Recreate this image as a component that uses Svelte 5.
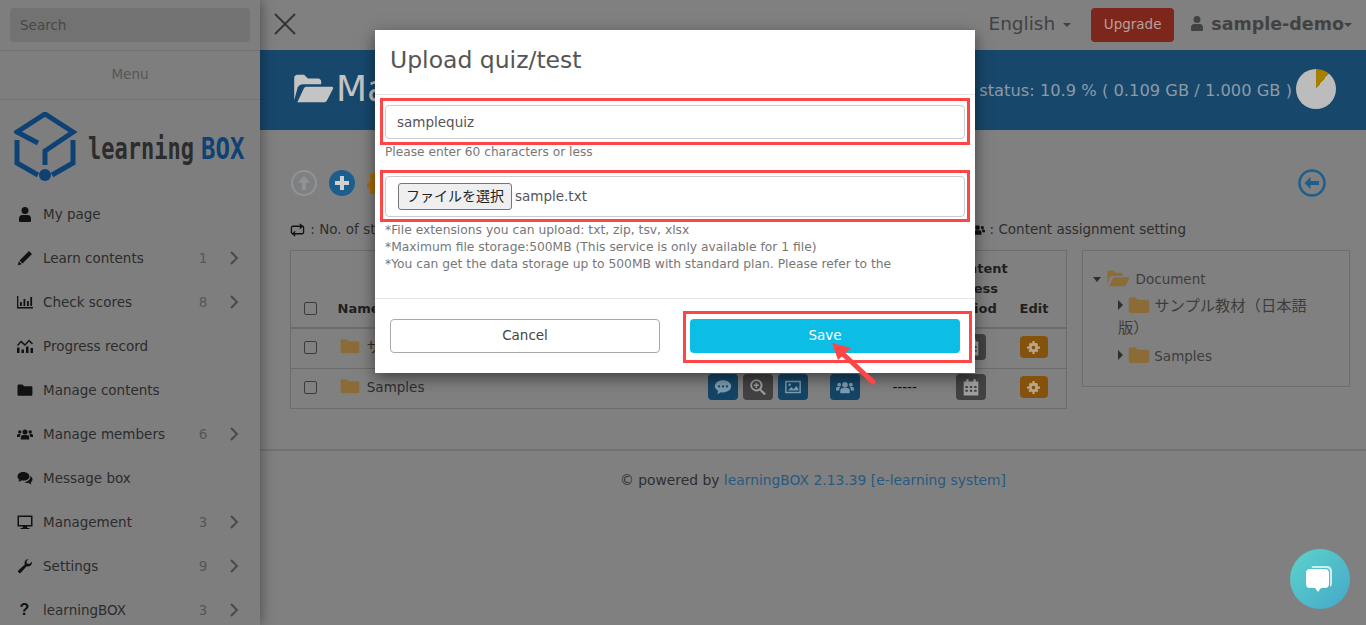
<script lang="ts">
  const icons: Record<string, string> = {
    user: 'M8 1a3.5 3.5 0 1 1 0 7a3.5 3.5 0 1 1 0-7z M2 15v-2.5C2 10.3 3.5 9 5 9h6c1.500 0 3 1.300 3 3.500V15c0 .5-.5 1-1 1H3c-.5 0-1-.5-1-1z',
    pencil: 'M12 1l3 3-9.500 9.500-3-3zM1.800 11.200l3 3L.8 15.200z',
    chart: 'M0 2h1.300v11H16v1.500H0zM3 8h1.800v4H3zM6.500 5h1.800v7H6.500zM10 7h1.800v5H10zM13.300 3h1.800v9h-1.800z',
    progress: 'M0 9.500h2.500V15H0zM4.500 11.500H7V15H4.500zM9 8.500h2.500V15H9zM13.500 10H16v5h-2.500zM0 7l4-4.500 4 3.500 4-4.500 4 4-1 1-3-3-4 4.500-4-3.500-3 3.500z',
    folder: 'M.5 4c0-.8.6-1.400 1.400-1.400h3.600l1.600 1.600h6.900c.8 0 1.400.6 1.400 1.400v6.800c0 .8-.6 1.400-1.400 1.400H1.900c-.8 0-1.400-.6-1.400-1.400z',
    users: 'M8 3.500a2.500 2.500 0 1 1 0 5a2.500 2.500 0 1 1 0-5zM3.800 13.500v-2.300c0-1.400 1-2.300 2.200-2.300h4c1.200 0 2.200.9 2.200 2.300v2.300zM2.800 4.200a1.700 1.700 0 1 1 0 3.400a1.700 1.700 0 1 1 0-3.400zM13.200 4.200a1.700 1.700 0 1 1 0 3.400a1.700 1.700 0 1 1 0-3.400zM0 11V9.600C0 8.600.7 8 1.600 8h2.200c-.6.7-1 1.500-1 3zM16 11V9.600c0-1-.7-1.600-1.600-1.600h-2.200c.6.700 1 1.500 1 3z',
    comments: 'M6.500 2C3 2 .5 4 .5 6.500c0 1.300.7 2.400 1.800 3.200L1.500 12l3-1.600c.6.1 1.300.2 2 .2 3.500 0 6-1.900 6-4.100S10 2 6.500 2zM13.500 6c1.200.8 2 1.900 2 3.200 0 1.200-.7 2.300-1.800 3l.8 2.300-3-1.600c-1.500.2-3-.1-4.200-.9 3.500 0 6.200-2.600 6.200-6z',
    desktop: 'M.5 1.500h15v11h-5.500l.5 1.500h2v1H3.500v-1h2l.5-1.500H.5zM2 3v8h12V3z',
    wrench: 'M15 4.500a4 4 0 0 1-5.300 3.800L4 14.500a1.600 1.600 0 0 1-2.500-2.300l6.300-5.700A4 4 0 0 1 11.500 1l-2 2.200.4 2.400 2.400.5 2.200-2.100z',
    gear: 'M8 3a5 5 0 1 1 0 10a5 5 0 1 1 0-10zM8 6a2 2 0 1 0 0 4a2 2 0 1 0 0-4zM6.800 1h2.400v3H6.800zM6.800 12h2.400v3H6.800zM1 6.800h3v2.400H1zM12 6.800h3v2.400h-3zM2.800 4.500l1.700-1.700 2 2-1.700 1.700zM9.500 11.200l1.700-1.700 2 2-1.700 1.700zM11.200 2.800l1.700 1.700-2 2-1.700-1.700zM4.500 9.500l1.700 1.700-2 2-1.700-1.700z',
    calendar: 'M1.500 3h2.300V1.200h2V3h4.400V1.200h2V3h2.300v12.500h-13zM3 7v1.800h2.200V7zM6.900 7v1.800h2.200V7zM10.800 7v1.800H13V7zM3 10.500v1.800h2.200v-1.800zM6.900 10.500v1.800h2.200v-1.800zM10.800 10.500v1.800H13v-1.800z',
    zoom: 'M6.500 1a5.500 5.500 0 0 1 4.300 8.900l4.200 4.200-1.300 1.300-4.200-4.200A5.500 5.500 0 1 1 6.500 1zM6.500 2.700a3.800 3.800 0 1 0 0 7.600a3.800 3.800 0 1 0 0-7.600zM5.800 4.200h1.400v1.600h1.600v1.400H7.200v1.600H5.800V7.200H4.200V5.800h1.600z',
    image: 'M1 2.500h14v11H1zM2.300 3.800v8.400h11.400V3.800zM3.500 11l3-3 2 2 2.500-3 1.800 2.500V11zM5 4.800a1.200 1.200 0 1 1 0 2.400a1.200 1.200 0 1 1 0-2.400z',
    comment: 'M8 2c4 0 7.300 2.400 7.300 5.400S12 12.800 8 12.800c-.7 0-1.300-.1-1.900-.2L3 14.500l.7-3.100C1.900 10.400.7 9 .7 7.400.7 4.400 4 2 8 2zM4.500 6.500a1 1 0 1 0 0 2a1 1 0 1 0 0-2zM8 6.500a1 1 0 1 0 0 2a1 1 0 1 0 0-2zM11.500 6.500a1 1 0 1 0 0 2a1 1 0 1 0 0-2z',
    openFolder: 'M1 13.500V3.400C1 2.600 1.600 2 2.400 2h3.100l1.700 1.700h4.600c.8 0 1.400.6 1.400 1.400v1.200H5c-1 0-1.900.5-2.400 1.400zM2.400 14.500l2.900-6.200c.3-.6.8-.9 1.400-.9H18c.6 0 .8.5.5 1l-2.700 5.200c-.3.6-.9.900-1.500.900z',
  };

  const navItems = [
    { icon: 'user', label: 'My page' },
    { icon: 'pencil', label: 'Learn contents', count: 1 },
    { icon: 'chart', label: 'Check scores', count: 8 },
    { icon: 'progress', label: 'Progress record' },
    { icon: 'folder', label: 'Manage contents' },
    { icon: 'users', label: 'Manage members', count: 6 },
    { icon: 'comments', label: 'Message box' },
    { icon: 'desktop', label: 'Management', count: 3 },
    { icon: 'wrench', label: 'Settings', count: 9 },
    { icon: '?', label: 'learningBOX', count: 3 },
  ];

  const rows = [
    { name: 'サンプル教材（日本語版）' },
    { name: 'Samples' },
  ];
</script>

{#snippet icon(name: string, cls = '')}
  <svg class="ic {cls}" viewBox="0 0 16 16" aria-hidden="true"><path d={icons[name]} /></svg>
{/snippet}

<div class="page">
  <aside class="side">
    <div class="side-search"><div class="search-box">Search</div></div>
    <div class="side-menu">Menu</div>
    <div class="logo">
      <svg width="232" height="72" viewBox="0 0 232 72" role="img" aria-label="learningBOX">
        <g fill="none" stroke="#0e4274" stroke-width="5">
          <path d="M24 31L3 20 31 2l28 18-28 19v14" />
          <path d="M3 28v23l21 12" />
          <path d="M59 28v23L38 63" />
        </g>
        <circle cx="31" cy="63" r="6" fill="#0e4274" />
        <text class="logo-a" transform="translate(74 47) scale(1 1.400)">learning</text>
        <text class="logo-b" transform="translate(187 47) scale(1 1.280)">BOX</text>
      </svg>
    </div>
    <nav class="nav">
      {#each navItems as item (item.label)}
        <div class="nav-item">
          <span class="nav-icon">
            {#if item.icon === '?'}
              <span class="q">?</span>
            {:else}
              {@render icon(item.icon)}
            {/if}
          </span>
          <span class="nav-label">{item.label}</span>
          {#if item.count}
            <span class="nav-count">{item.count}</span>
            <svg class="chev" viewBox="0 0 10 16" aria-hidden="true"><path d="M2 2l6 6-6 6" /></svg>
          {/if}
        </div>
      {/each}
    </nav>
  </aside>

  <main class="main">
    <header class="top">
      <svg class="close" viewBox="0 0 24 24" aria-hidden="true"><path d="M2 2l20 20M22 2L2 22" /></svg>
      <div class="top-right">
        <span class="lang">English <i class="caret"></i></span>
        <span class="upgrade">Upgrade</span>
        <span class="account">
          <svg class="ic acct-ic" viewBox="0 0 16 16" aria-hidden="true"><path d={icons.user} /></svg>
          sample-demo<i class="caret small"></i>
        </span>
      </div>
    </header>

    <section class="band">
      <svg class="band-ic" viewBox="0 0 19 16" aria-hidden="true"><path d={icons.openFolder} /></svg>
      <h1>Manage contents</h1>
      <div class="status">status: 10.9 % ( 0.109 GB / 1.000 GB )</div>
      <div class="pie"></div>
    </section>

    <section class="content">
      <div class="toolbar">
        <svg class="round up" viewBox="0 0 26 26" aria-hidden="true">
          <circle cx="13" cy="13" r="12" />
          <path d="M13 6l6 6.500h-4V20h-4v-7.500H7z" />
        </svg>
        <svg class="round plus" viewBox="0 0 26 26" aria-hidden="true">
          <circle cx="13" cy="13" r="13" />
          <path d="M11 6h4v5h5v4h-5v5h-4v-5H6v-4h5z" />
        </svg>
        <svg class="puzzle" viewBox="0 0 20 22" aria-hidden="true">
          <path d="M3 2h4c-1-2 0-2 1.500-2S11 0 10 2h7v20H3v-6c-2 1-3 0-3-2.500S1 10 3 11z" />
        </svg>
        <svg class="round back" viewBox="0 0 28 28" aria-hidden="true">
          <circle cx="14" cy="14" r="12.500" />
          <path d="M12.500 8l-6 6 6 6v-4H21v-4h-8.500z" />
        </svg>
      </div>

      <div class="legend">
        <span class="lg">
          <svg class="retweet" viewBox="0 0 16 16" aria-hidden="true">
            <path d="M4 12.500H3a1.500 1.500 0 0 1-1.500-1.500V6A1.500 1.500 0 0 1 3 4.500h9.500M10.500 2l2.500 2.500L10.500 7" />
            <path d="M12 4.500h1A1.500 1.500 0 0 1 14.500 6v5a1.500 1.500 0 0 1-1.500 1.500H3.500M5.500 10L3 12.500 5.500 15" />
          </svg>
          : No. of study
        </span>
        <span class="lg">{@render icon('users')} : Content assignment setting</span>
      </div>

      <div class="columns">
        <table class="tbl">
          <colgroup>
            <col style="width:47px" /><col /><col style="width:122px" /><col style="width:55px" />
            <col style="width:65px" /><col style="width:70px" /><col style="width:47px" />
          </colgroup>
          <thead>
            <tr>
              <th class="cb"><span class="check"></span></th>
              <th>Name</th>
              <th></th>
              <th></th>
              <th></th>
              <th>Content access period</th>
              <th>Edit</th>
            </tr>
          </thead>
          <tbody>
            {#each rows as r (r.name)}
              <tr>
                <td class="cb"><span class="check"></span></td>
                <td><span class="row-name">{@render icon('folder', 'folder-ic')} {r.name}</span></td>
                <td>
                  <span class="acts">
                    <span class="btn blue">{@render icon('comment')}</span>
                    <span class="btn dark">{@render icon('zoom')}</span>
                    <span class="btn blue">{@render icon('image')}</span>
                  </span>
                </td>
                <td><span class="btn blue">{@render icon('users')}</span></td>
                <td class="dash">-----</td>
                <td><span class="btn dark cal">{@render icon('calendar')}</span></td>
                <td><span class="btn orange">{@render icon('gear')}</span></td>
              </tr>
            {/each}
          </tbody>
        </table>

        <div class="tree">
          <div class="tree-root">
            <i class="tri down"></i>
            <svg class="tree-open" viewBox="0 0 19 16" aria-hidden="true"><path d={icons.openFolder} /></svg>
            Document
          </div>
          <div class="tree-node">
            <i class="tri"></i>{@render icon('folder', 'tree-folder')} <span class="ja">サンプル教材（日本語版）</span>
          </div>
          <div class="tree-node">
            <i class="tri"></i>{@render icon('folder', 'tree-folder')} Samples
          </div>
        </div>
      </div>
    </section>

    <footer class="foot">© powered by <span class="foot-link">learningBOX 2.13.39 [e-learning system]</span></footer>
  </main>

  <div class="chat">
    <svg viewBox="0 0 32 32" width="32" height="32" aria-hidden="true">
      <path class="chat-back" d="M9 3h14c3 0 5 2 5 5v12c0 2-.6 3.200-2 4V9c0-2.500-1.500-4-4-4H7.500C7.800 3.700 8.300 3 9 3z" />
      <path class="chat-front" d="M6 6h15c2.500 0 4 1.500 4 4v11c0 2.500-1.500 4-4 4h-4l-3 4-3-4H6c-2.500 0-4-1.500-4-4V10c0-2.500 1.500-4 4-4z" />
    </svg>
  </div>

  <div class="modal" role="dialog" aria-label="Upload quiz/test">
    <div class="modal-head"><h2>Upload quiz/test</h2></div>
    <div class="modal-body">
      <div class="marked first"><div class="field">samplequiz</div></div>
      <p class="hint">Please enter 60 characters or less</p>
      <div class="marked second">
        <div class="field file"><span class="file-btn">ファイルを選択</span><span>sample.txt</span></div>
      </div>
      <div class="notes">
        <p>*File extensions you can upload: txt, zip, tsv, xlsx</p>
        <p>*Maximum file storage:500MB (This service is only available for 1 file)</p>
        <p>*You can get the data storage up to 500MB with standard plan. Please refer to the</p>
      </div>
    </div>
    <div class="modal-foot">
      <button class="cancel" type="button">Cancel</button>
      <div class="marked third"><button class="save" type="button">Save</button></div>
    </div>
    <svg class="pointer" viewBox="0 0 50 50" aria-hidden="true">
      <path d="M45 43L15 15" class="pointer-line" />
      <path d="M4 4l19 5-13 12z" class="pointer-head" />
    </svg>
  </div>
</div>

<style>
  :global(body) {
    margin: 0;
    background: #808080;
    overflow: hidden;
  }

  .page {
    position: relative;
    display: flex;
    width: 1366px;
    height: 625px;
    overflow: hidden;
    font-family: 'DejaVu Sans', 'Noto Sans CJK JP', sans-serif;
    font-size: 13.500px;
    color: #333;
    background: #808080;
  }

  .ic {
    display: inline-block;
    width: 16px;
    height: 16px;
    fill: currentColor;
    vertical-align: -3px;
  }

  /* ── Sidebar ── */
  .side {
    position: relative;
    z-index: 1;
    flex: 0 0 260px;
    height: 625px;
    overflow: hidden;
    background: #7e7e7e;
    box-shadow: 2px 0 12px rgba(0, 0, 0, 0.35);
  }

  .side-search {
    height: 51px;
    padding: 8px 10px;
    box-sizing: border-box;
    border-bottom: 1px solid #727272;
  }

  .search-box {
    height: 34px;
    line-height: 34px;
    padding-left: 10px;
    border-radius: 4px;
    background: #727272;
    color: #474747;
  }

  .side-menu {
    height: 49px;
    line-height: 47px;
    box-sizing: border-box;
    text-align: center;
    color: #565656;
    border-bottom: 1px solid #727272;
  }

  .logo {
    height: 92px;
    padding: 12px 0 0 14px;
    box-sizing: border-box;
  }

  .logo-a {
    font-family: 'DejaVu Sans Mono', monospace;
    font-weight: 700;
    font-size: 22px;
    fill: #2c2c2c;
  }

  .logo-b {
    font-family: 'DejaVu Sans Mono', monospace;
    font-weight: 700;
    font-size: 24px;
    fill: #0e4274;
  }

  .nav {
    display: flex;
    flex-direction: column;
  }

  .nav-item {
    display: flex;
    align-items: center;
    height: 44px;
    padding-left: 16px;
    color: #2c2c2c;
  }

  .nav-icon {
    display: flex;
    justify-content: center;
    width: 17px;
    margin-right: 10px;
    color: #111;
  }

  .q {
    font-family: 'Liberation Sans', sans-serif;
    font-weight: 700;
    font-size: 16px;
    line-height: 16px;
  }

  .nav-label {
    flex: 1;
  }

  .nav-count {
    width: 10px;
    margin-right: 21px;
    text-align: center;
    color: #565656;
  }

  .chev {
    width: 10px;
    height: 16px;
    margin-right: 21px;
    fill: none;
    stroke: #4a4a4a;
    stroke-width: 2;
  }

  /* ── Main ── */
  .main {
    flex: 1;
    min-width: 0;
    display: flex;
    flex-direction: column;
  }

  .top {
    display: flex;
    align-items: center;
    justify-content: space-between;
    height: 50px;
    padding: 0 14px 0 13px;
    box-sizing: border-box;
  }

  .close {
    width: 24px;
    height: 24px;
    margin-top: -2px;
    fill: none;
    stroke: #333;
    stroke-width: 1.800;
  }

  .top-right {
    display: flex;
    align-items: center;
    gap: 15px;
  }

  .lang,
  .account {
    margin-top: -3px;
    font-size: 17.500px;
    font-weight: 700;
    color: #424242;
  }

  .lang {
    font-size: 18.500px;
    font-weight: 400;
    margin-right: 5px;
  }

  .caret {
    display: inline-block;
    vertical-align: 3px;
    margin-left: 2px;
    border-top: 4px solid #424242;
    border-left: 4px solid transparent;
    border-right: 4px solid transparent;
  }

  .caret.small {
    margin-left: 0;
  }

  .upgrade {
    width: 83px;
    height: 34px;
    line-height: 33px;
    text-align: center;
    border-radius: 4px;
    background: #7c261c;
    color: #b8a09c;
    font-size: 13.500px;
  }

  .acct-ic {
    width: 16px;
    height: 20px;
    vertical-align: -3px;
  }

  .band {
    display: flex;
    align-items: center;
    height: 80px;
    padding: 0 30px 0 32px;
    box-sizing: border-box;
    background: #17486c;
    color: #c4c4c4;
  }

  .band-ic {
    width: 42px;
    height: 36px;
    fill: #c4c4c4;
    margin-right: 2px;
    margin-top: -4px;
  }

  h1 {
    margin: -4px 0 0;
    font-size: 36px;
    font-weight: 400;
    white-space: nowrap;
  }

  .status {
    margin-left: auto;
    margin-right: 4px;
    font-size: 16.300px;
    white-space: nowrap;
    color: #8c9aa6;
  }

  .pie {
    flex: none;
    width: 40px;
    height: 40px;
    margin-top: -2px;
    border-radius: 50%;
    background: conic-gradient(#a47f00 0 10.9%, #bcbcbc 10.9% 100%);
  }

  /* ── Content ── */
  .content {
    padding: 40px 16px 0 30px;
  }

  .toolbar {
    display: flex;
    align-items: center;
    height: 26px;
    gap: 12px;
    padding-left: 1px;
  }

  .round {
    width: 26px;
    height: 26px;
  }

  .up circle {
    fill: none;
    stroke: #8b959c;
    stroke-width: 2;
  }

  .up path {
    fill: #8b959c;
  }

  .plus circle {
    fill: #1c5e8e;
  }

  .plus path {
    fill: #d0d0d0;
  }

  .puzzle {
    width: 20px;
    height: 22px;
    fill: #a86c0c;
  }

  .back {
    width: 28px;
    height: 28px;
    margin-left: auto;
    margin-right: 24px;
  }

  .back circle {
    fill: none;
    stroke: #1c5e8e;
    stroke-width: 2.500;
  }

  .back path {
    fill: #1c5e8e;
  }

  .legend {
    display: flex;
    justify-content: space-between;
    width: 896px;
    height: 20px;
    margin-top: 23px;
    line-height: 20px;
    color: #2e2e2e;
  }

  .lg .retweet {
    width: 15px;
    height: 15px;
    margin-right: 1px;
    vertical-align: -3px;
    fill: none;
    stroke: #111;
    stroke-width: 1.400;
  }

  .lg :global(.ic) {
    width: 15px;
    height: 15px;
    color: #111;
  }

  .columns {
    display: flex;
    align-items: flex-start;
    gap: 15px;
    margin-top: 11px;
  }

  .tbl {
    flex: none;
    width: 777px;
    table-layout: fixed;
    border-collapse: collapse;
    border: 1px solid #6c6c6c;
    color: #2e2e2e;
  }

  .tbl th {
    padding: 8px 0 8px;
    box-sizing: border-box;
    border-bottom: 2px solid #6c6c6c;
    vertical-align: bottom;
    text-align: left;
    font-weight: 700;
    font-size: 13px;
    line-height: 20px;
    color: #1f1f1f;
  }

  .tbl td {
    height: 40px;
    padding: 0 0 2px;
    box-sizing: border-box;
    border-bottom: 1px solid #6c6c6c;
  }

  .tbl .cb {
    padding-left: 13px;
  }

  .check {
    display: inline-block;
    width: 13px;
    height: 13px;
    vertical-align: -2px;
    border: 1px solid #3d3d3d;
    border-radius: 2px;
    box-sizing: border-box;
  }

  .row-name {
    position: relative;
    top: -1px;
    white-space: nowrap;
  }

  .row-name :global(.folder-ic) {
    width: 20px;
    height: 20px;
    margin: 0 3px 0 2px;
    vertical-align: -4px;
    color: #8c6c36;
  }

  .acts {
    display: flex;
    gap: 5px;
  }

  .btn {
    display: inline-flex;
    align-items: center;
    justify-content: center;
    width: 30px;
    height: 26px;
    border-radius: 4px;
    vertical-align: middle;
  }

  .btn :global(.ic) {
    width: 18px;
    height: 18px;
  }

  .blue {
    background: #154566;
    color: #7d9cb2;
  }

  .dark {
    background: #424242;
    color: #a0a0a0;
  }

  .orange {
    width: 28px;
    height: 22px;
    background: #84520a;
    color: #b8a58a;
  }

  .orange :global(.ic) {
    width: 15px;
    height: 15px;
  }

  .cal {
    margin-left: 6px;
  }

  .tbl .dash {
    padding-left: 8px;
    color: #111;
  }

  .tree {
    flex: none;
    box-sizing: border-box;
    width: 268px;
    height: 137px;
    padding: 17px 10px 0 10px;
    border: 1px solid #6c6c6c;
    color: #3d3d3d;
  }

  .tree-root {
    line-height: 20px;
  }

  .tree-open {
    width: 24px;
    height: 20px;
    margin: 0 1px;
    vertical-align: -4px;
    fill: #8c6c36;
  }

  .tree-node {
    margin-top: 5px;
    padding: 0 25px 0 25px;
    line-height: 22px;
  }

  .tree-node + .tree-node {
    margin-top: 5px;
  }

  .ja {
    font-size: 15.300px;
  }

  .tree-node :global(.tree-folder) {
    width: 22px;
    height: 22px;
    vertical-align: -5px;
    color: #8c6c36;
  }

  .tri {
    display: inline-block;
    margin-right: 5px;
    vertical-align: 1px;
    border-left: 5px solid #2e2e2e;
    border-top: 5px solid transparent;
    border-bottom: 5px solid transparent;
  }

  .tri.down {
    margin-right: 0;
    vertical-align: 2px;
    border-left: 4.500px solid transparent;
    border-right: 4.500px solid transparent;
    border-top: 5px solid #2e2e2e;
    border-bottom: 0;
  }

  .foot {
    margin-top: 40px;
    padding-top: 19px;
    border-top: 2px solid #727272;
    text-align: center;
    font-size: 13.850px;
    color: #2e2e2e;
    line-height: 20px;
  }

  .foot-link {
    color: #265a80;
  }

  .chat {
    position: absolute;
    left: 1290px;
    top: 549px;
    z-index: 1;
    display: flex;
    align-items: center;
    justify-content: center;
    width: 60px;
    height: 60px;
    border-radius: 50%;
    background: linear-gradient(135deg, #5cd3cb, #45a8c9);
  }

  .chat-back {
    fill: #cfeef0;
  }

  .chat-front {
    fill: #fff;
  }

  /* ── Modal ── */
  .modal {
    position: absolute;
    left: 375px;
    top: 30px;
    z-index: 2;
    width: 600px;
    height: 343px;
    background: #fff;
    box-shadow: 0 5px 15px rgba(0, 0, 0, 0.5);
    color: #555;
  }

  .modal-head {
    height: 65px;
    padding: 0 15px;
    box-sizing: border-box;
    border-bottom: 1px solid #e5e5e5;
  }

  h2 {
    margin: 0;
    font-size: 23.500px;
    font-weight: 400;
    line-height: 61px;
    color: #555;
  }

  .modal-body {
    height: 203px;
    padding: 3px 5px 0;
    box-sizing: border-box;
  }

  .marked {
    box-sizing: border-box;
    border: 3px solid #ff4545;
  }

  .first {
    height: 47px;
    padding: 4px 2px 0;
  }

  .second {
    height: 52px;
    padding: 3px 2px 0;
  }

  .field {
    height: 34px;
    padding: 0 11px;
    line-height: 32px;
    box-sizing: border-box;
    border: 1px solid #ccc;
    border-radius: 4px;
    color: #555;
  }

  .file {
    display: flex;
    align-items: center;
    height: 41px;
    padding: 0 12px;
    gap: 3px;
    line-height: 1;
  }

  .file-btn {
    width: 114px;
    height: 27px;
    line-height: 24px;
    box-sizing: border-box;
    text-align: center;
    border: 1px solid #767676;
    border-radius: 3px;
    background: #efefef;
    color: #222;
    font-size: 14px;
  }

  .hint {
    margin: 0;
    height: 25px;
    padding-left: 5px;
    font-size: 12.200px;
    line-height: 14px;
    color: #777;
  }

  .notes {
    padding: 0 0 0 5px;
    font-size: 12.300px;
    line-height: 17px;
    color: #777;
  }

  .notes p {
    margin: 0;
    white-space: nowrap;
  }

  .modal-foot {
    position: relative;
    display: flex;
    height: 75px;
    box-sizing: border-box;
    padding: 12px 0 0 15px;
    border-top: 1px solid #e5e5e5;
  }

  .cancel,
  .save {
    width: 270px;
    height: 34px;
    padding: 0 0 2px;
    border-radius: 4px;
    font-family: inherit;
    font-size: 13.500px;
  }

  .cancel {
    margin-top: 8px;
    border: 1px solid #aaa;
    background: #fff;
    color: #444;
  }

  .third {
    height: 52px;
    margin-left: 23px;
    padding: 5px 9px 0 4px;
  }

  .save {
    border: 0;
    background: #0cbde6;
    color: #fff;
  }

  .pointer {
    position: absolute;
    left: 453px;
    top: 309px;
    width: 50px;
    height: 50px;
    overflow: visible;
  }

  .pointer-line {
    fill: none;
    stroke: #ff4545;
    stroke-width: 5;
    stroke-linecap: round;
  }

  .pointer-head {
    fill: #ff4545;
  }
</style>
